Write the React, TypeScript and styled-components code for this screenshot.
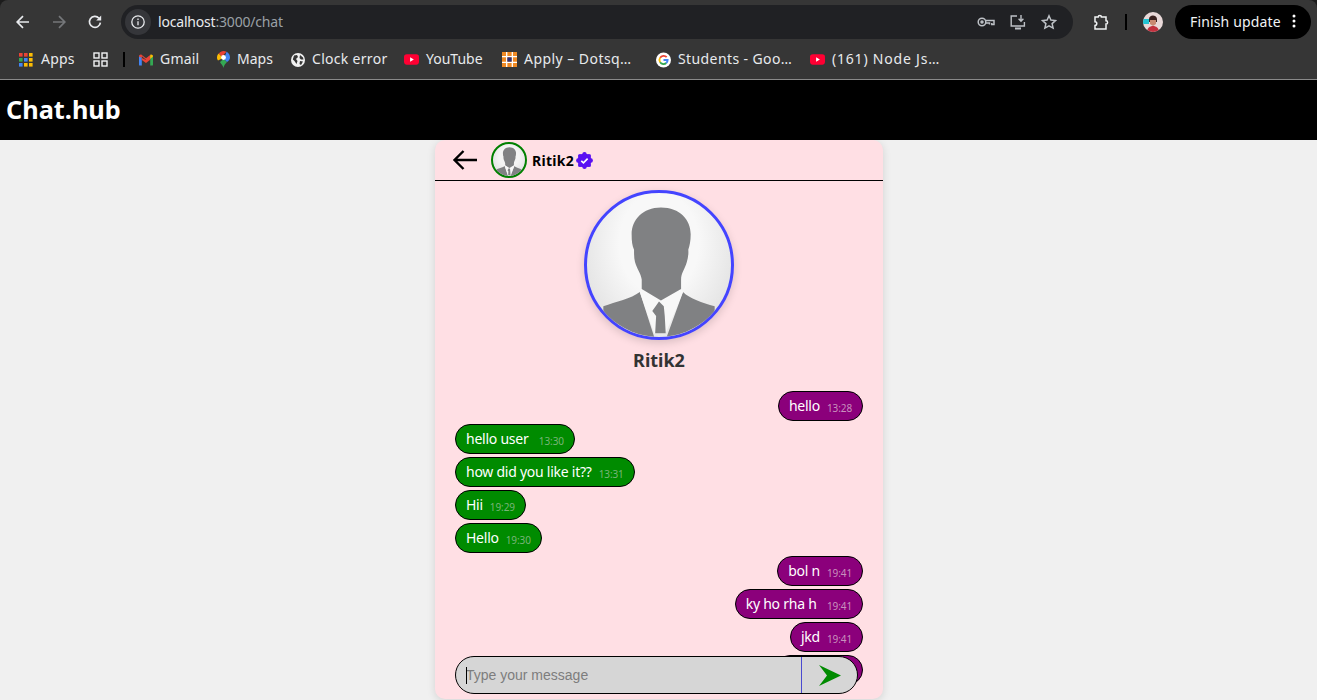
import React from 'react';
import styled, { createGlobalStyle } from 'styled-components';

const GlobalStyle = createGlobalStyle`
  * { box-sizing: border-box; }
  html, body { margin: 0; padding: 0; height: 100%; background: #1c1c1c; overflow: hidden; }
  body { font-family: "Noto Sans", "Liberation Sans", sans-serif; }
`;

const UI_FONT = `"Noto Sans", "Liberation Sans", sans-serif`;

const bookmarks = [
  { id: 'gmail', label: 'Gmail', width: 40, spacing: 0.2 },
  { id: 'maps', label: 'Maps', width: 37, spacing: 0 },
  { id: 'globe', label: 'Clock error', width: 75, spacing: 0.3 },
  { id: 'yt', label: 'YouTube', width: 59, spacing: 0 },
  { id: 'apply', label: 'Apply – Dotsq…', width: 115, spacing: 0.45 },
  { id: 'google', label: 'Students - Goo…', width: 115, spacing: 0.4 },
  { id: 'yt', label: '(161) Node Js…', width: 108, spacing: 0.8 },
];

// trailing spaces are part of the message text
const messages = [
  { text: 'hello', time: '13:28', mine: true },
  { text: 'hello user ', time: '13:30', mine: false },
  { text: 'how did you like it??', time: '13:31', mine: false },
  { text: 'Hii', time: '19:29', mine: false },
  { text: 'Hello', time: '19:30', mine: false },
  { text: 'bol n', time: '19:41', mine: true },
  { text: 'ky ho rha h ', time: '19:41', mine: true },
  { text: 'jkd', time: '19:41', mine: true },
  { text: 'hello ', time: '19:41', mine: true },
];

const Silhouette = () => (
  <svg viewBox="0 0 150 150" width="100%" height="100%">
    <path
      fill="#808183"
      d="M17 118 C30 113 46 110 55 103 L70 150 L83 150 L100 103 C107 110 120 114 133 118 L133 150 L17 150 Z"
    />
    <path fill="#f8f8f8" d="M55 103 L60 96 L94 96 L100 103 L82 146 L70 146 Z" />
    <path
      fill="#808183"
      d="M77 15 C97 15 108 28 108 43 C108 50 107 55 105.500 59 C106 64 105 68 104 72 C102 79 98 84 98 90 L98 100 L77 112 L57 100 L57 90 C56 84 52 79 50 72 C49 68 49 64 49 59 C47 55 46.500 50 46.500 43 C46.500 28 58 15 77 15 Z"
    />
    <path fill="#808183" d="M68 123 L75 113 L80 118 L81 128 L82 146 L71 146 L72 128 Z" />
  </svg>
);

const Favicon = ({ kind }: { kind: string }) => {
  if (kind === 'gmail')
    return (
      <svg width="14" height="12" viewBox="0 0 15 12">
        <path fill="#4285f4" d="M0 2h3v10H1a1 1 0 0 1-1-1z" />
        <path fill="#34a853" d="M12 2h3v9a1 1 0 0 1-1 1h-2z" />
        <path fill="#ea4335" d="M3 2v4l4.500 3.300V5.600L3 2z M0 2.200C0 .6 1.800-.4 3 .6l4.500 3.400v2L0 2.200z" />
        <path fill="#ea4335" d="M7.500 4 L12 .6 V5.800 L7.500 9.300z" />
        <path fill="#fbbc04" d="M12 .6c1.200-1 3-.1 3 1.600L12 5z" />
      </svg>
    );
  if (kind === 'maps')
    return (
      <svg width="13" height="17" viewBox="0 0 13 17">
        <path fill="#34a853" d="M3 11 C4 13 6 14.500 6.500 17 C7 14.500 8 13 10 11 L6.500 8z" />
        <path fill="#fbbc04" d="M1 9.500 C0 8 0 7 0 6.500 C0 5 .6 3.600 1.800 2.600 L6 7z" />
        <path fill="#ea4335" d="M1.800 2.600 C3 1 4.800 0 6.500 0 C7.600 0 8.600 .3 9.500 .8 L5 5.500z" />
        <path fill="#4285f4" d="M9.500 .8 C11.600 2 13 4 13 6.500 C13 8 12 9.800 10 11 L7 8z" />
        <circle cx="6.500" cy="6.500" r="2.400" fill="#fff" />
      </svg>
    );
  if (kind === 'globe')
    return (
      <svg width="14" height="14" viewBox="0 0 14 14">
        <circle cx="7" cy="7" r="7" fill="#f1f1f1" />
        <path fill="#363636" d="M3 2.500 L6 2 L7 4 L5 6 L6.500 8 L5.500 11 L3.500 8 L1.800 6.500z M9 2 L12 4.500 L12.500 6.500 L10 6.500 L8.500 5z M9 8 L12 8.500 L10 12 L8.500 11z" />
      </svg>
    );
  if (kind === 'yt')
    return (
      <svg width="15" height="11" viewBox="0 0 16 11">
        <rect width="16" height="11" rx="3" fill="#ff0033" />
        <path fill="#fff" d="M6.500 3.200 L10.500 5.500 L6.500 7.800z" />
      </svg>
    );
  if (kind === 'apply')
    return (
      <svg width="15" height="15" viewBox="0 0 16 16">
        <rect width="16" height="16" fill="#f08a24" />
        <path stroke="#fff" strokeWidth="1.400" d="M5 0v16M11 0v16M0 5h16M0 11h16" />
        <rect x="5.700" y="5.700" width="4.600" height="4.600" fill="#2b2f7a" />
      </svg>
    );
  return (
    <svg width="15" height="16" viewBox="0 0 16 16">
      <circle cx="8" cy="8" r="8" fill="#fff" />
      <path fill="none" stroke="#ea4335" strokeWidth="2" d="M11.400 5 A4.400 4.400 0 0 0 4.400 5.600" />
      <path fill="none" stroke="#fbbc04" strokeWidth="2" d="M4.400 5.600 A4.400 4.400 0 0 0 4.400 10.400" />
      <path fill="none" stroke="#34a853" strokeWidth="2" d="M4.400 10.400 A4.400 4.400 0 0 0 11 11.200" />
      <path fill="none" stroke="#4285f4" strokeWidth="2" d="M11 11.200 A4.400 4.400 0 0 0 12.400 8 H8" />
    </svg>
  );
};

const AppsIcon = () => (
  <svg width="15" height="14" viewBox="0 0 15 14">
    {[0, 5, 10].map((x, i) =>
      [0, 5, 10].map((y, j) => (
        <rect
          key={`${i}-${j}`}
          x={x}
          y={y}
          width="3.600"
          height="3.600"
          fill={[['#ea4335', '#34a853', '#4285f4'], ['#ea4335', '#4285f4', '#fbbc04'], ['#fbbc04', '#fbbc04', '#fbbc04']][i][j]}
        />
      )),
    )}
  </svg>
);

const VerifiedBadge = () => (
  <svg width="17" height="17" viewBox="0 0 18 18">
    <circle cx="9" cy="9" r="7.400" fill="#5b12f2" />
    {[0, 45, 90, 135, 180, 225, 270, 315].map((deg) => (
      <circle
        key={deg}
        cx={9 + 6.600 * Math.cos((deg * Math.PI) / 180)}
        cy={9 + 6.600 * Math.sin((deg * Math.PI) / 180)}
        r="2.300"
        fill="#5b12f2"
      />
    ))}
    <path fill="none" stroke="#fff" strokeWidth="1.800" d="M5.600 9.300l2.300 2.100 4.400-4.300" />
  </svg>
);

const App: React.FC = () => {
  return (
    <Screen>
      <GlobalStyle />
      <Browser>
        <Toolbar>
          <NavButton>
            <svg width="16" height="16" viewBox="0 0 16 16" fill="none" stroke="#e8eaed" strokeWidth="1.700">
              <path d="M14 8H2.500M8 2.200 2.200 8 8 13.800" />
            </svg>
          </NavButton>
          <NavButton>
            <svg width="16" height="16" viewBox="0 0 16 16" fill="none" stroke="#75777a" strokeWidth="1.700">
              <path d="M2 8h11.500M8 2.200 13.800 8 8 13.800" />
            </svg>
          </NavButton>
          <NavButton>
            <svg width="16" height="16" viewBox="0 0 16 16" fill="none" stroke="#e8eaed" strokeWidth="1.700">
              <path d="M13.400 8.600A5.500 5.500 0 1 1 12 4.200" />
              <path fill="#e8eaed" stroke="none" d="M14.200 1.600v5h-5z" />
            </svg>
          </NavButton>
          <Omnibox>
            <InfoChip>
              <svg width="14" height="14" viewBox="0 0 14 14" fill="none" stroke="#e8eaed" strokeWidth="1.300">
                <circle cx="7" cy="7" r="6.200" />
                <path d="M7 6.200v4M7 3.600v1.400" />
              </svg>
            </InfoChip>
            <Url>
              localhost<UrlMuted>:3000/chat</UrlMuted>
            </Url>
            <OmniIcons>
              <svg width="18" height="12" viewBox="0 0 18 12" fill="none" stroke="#bdc1c6" strokeWidth="1.500">
                <circle cx="5" cy="6" r="3.800" />
                <circle cx="5" cy="6" r="1" fill="#bdc1c6" />
                <path d="M9 4.600h8v3.800h-2.200v-1.400M12.500 8.400V7H9" />
              </svg>
              <svg width="16" height="16" viewBox="0 0 16 16" fill="none" stroke="#bdc1c6" strokeWidth="1.400">
                <path d="M7 2H1.200v10h13.200V8" />
                <path d="M5 14.500h6" strokeWidth="2" />
                <path d="M11 1v6M8.600 4.800 11 7.200l2.400-2.400" />
              </svg>
              <svg width="16" height="16" viewBox="0 0 16 16" fill="none" stroke="#bdc1c6" strokeWidth="1.500">
                <path d="M8 1.800 9.900 6l4.600.5-3.400 3.100 1 4.500L8 11.800l-4.100 2.300 1-4.500L1.500 6.500 6.100 6z" />
              </svg>
            </OmniIcons>
          </Omnibox>
          <ExtensionButton>
            <svg width="17" height="17" viewBox="0 0 17 17" fill="none" stroke="#f1f3f4" strokeWidth="1.500">
              <path d="M3 3h3.200a1.600 1.600 0 0 1 3.200 0H14v3.800a1.600 1.600 0 0 1 0 3.200V15H3v-3.600a1.800 1.800 0 0 0 0-3.600z" />
            </svg>
          </ExtensionButton>
          <ToolbarDivider />
          <ProfileButton>
            <ProfilePhoto>
              <svg width="20" height="20" viewBox="0 0 20 20">
                <rect width="20" height="20" fill="#e9d9d9" />
                <path fill="#3b2220" d="M6 7c0-4 7-5 8 0v3H6z" />
                <path fill="#c98a72" d="M7 8h6v4l-3 2-3-2z" />
                <path fill="#c2313f" d="M4 20c0-4 3-6 6-6s6 2 6 6z" />
                <rect x="0" y="7" width="6" height="5" fill="#22c4d4" />
              </svg>
            </ProfilePhoto>
          </ProfileButton>
          <UpdatePill>
            Finish update
            <svg width="4" height="14" viewBox="0 0 4 14" fill="#fff">
              <circle cx="2" cy="2" r="1.500" />
              <circle cx="2" cy="7" r="1.500" />
              <circle cx="2" cy="12" r="1.500" />
            </svg>
          </UpdatePill>
        </Toolbar>
        <BookmarkBar>
          <Bookmark>
            <AppsIcon />
            <BookmarkLabel $width={35} $spacing={0.2}>
              Apps
            </BookmarkLabel>
          </Bookmark>
          <GridButton>
            <svg width="15" height="15" viewBox="0 0 15 15" fill="none" stroke="#f1f3f4" strokeWidth="1.400">
              <rect x="1" y="1" width="5" height="5" />
              <rect x="9" y="1" width="5" height="5" />
              <rect x="1" y="9" width="5" height="5" />
              <rect x="9" y="9" width="5" height="5" />
            </svg>
          </GridButton>
          <BookmarkDivider />
          {bookmarks.map((b) => (
            <Bookmark key={b.label}>
              <Favicon kind={b.id} />
              <BookmarkLabel $width={b.width} $spacing={b.spacing}>
                {b.label}
              </BookmarkLabel>
            </Bookmark>
          ))}
        </BookmarkBar>
      </Browser>

      <Page>
        <Navbar>
          <Brand>Chat.hub</Brand>
        </Navbar>
        <Main>
          <ChatCard>
            <ChatHeader>
              <BackArrow width="26" height="22" viewBox="0 0 26 22" fill="none" stroke="#000" strokeWidth="2.400">
                <path d="M25 11H3M11.500 2 2.500 11l9 9" />
              </BackArrow>
              <SmallAvatar>
                <Silhouette />
              </SmallAvatar>
              <HeaderName>Ritik2</HeaderName>
              <VerifiedBadge />
            </ChatHeader>
            <Profile>
              <LargeAvatar>
                <Silhouette />
              </LargeAvatar>
              <ProfileName>Ritik2</ProfileName>
            </Profile>
            <MessageList>
              {messages.map((m, i) => (
                <Bubble key={i} $mine={m.mine}>
                  {m.text}
                  <Time $mine={m.mine}>{m.time}</Time>
                </Bubble>
              ))}
            </MessageList>
            <Composer>
              <Caret />
              <MessageInput placeholder="Type your message" readOnly />
              <SendButton>
                <svg width="22" height="21" viewBox="0 0 22 21">
                  <path fill="#008b00" d="M0 0 22 10.500 0 21 8 10.500z" />
                </svg>
              </SendButton>
            </Composer>
          </ChatCard>
        </Main>
      </Page>
    </Screen>
  );
};

export default App;

const Screen = styled.div`
  width: 1317px;
  height: 700px;
  display: flex;
  flex-direction: column;
  overflow: hidden;
`;

const Browser = styled.header`
  height: 80px;
  flex: none;
  background: #363636;
  border-radius: 8px 8px 0 0;
  border-bottom: 1px solid #8a8a8a;
  font-family: ${UI_FONT};
`;

const Toolbar = styled.div`
  height: 40px;
  padding: 5px 6px 0 5px;
  display: flex;
  align-items: stretch;
`;

const NavButton = styled.div`
  width: 36px;
  height: 34px;
  display: flex;
  align-items: center;
  justify-content: center;
`;

const Omnibox = styled.div`
  flex: 1;
  margin-left: 8px;
  height: 34px;
  border-radius: 17px;
  background: #202124;
  display: flex;
  align-items: center;
  padding: 0 16px 0 4px;
`;

const InfoChip = styled.div`
  width: 26px;
  height: 26px;
  border-radius: 50%;
  background: #35363a;
  display: flex;
  align-items: center;
  justify-content: center;
`;

const Url = styled.div`
  margin: 0 0 2px 7px;
  font-size: 14px;
  color: #e8eaed;
  letter-spacing: -0.19px;
`;

const UrlMuted = styled.span`
  color: #9aa0a6;
`;

const OmniIcons = styled.div`
  margin-left: auto;
  display: flex;
  align-items: center;
  gap: 15px;
`;

const ExtensionButton = styled(NavButton)`
  margin-left: 9px;
`;

const ToolbarDivider = styled.div`
  width: 2px;
  height: 16px;
  margin: 9px 0 0 7px;
  background: #000;
`;

const ProfileButton = styled(NavButton)`
  margin-left: 8px;
`;

const ProfilePhoto = styled.div`
  width: 20px;
  height: 20px;
  border-radius: 50%;
  overflow: hidden;
  display: flex;
`;

const UpdatePill = styled.div`
  margin-left: 4px;
  width: 136px;
  height: 34px;
  padding: 0 15px 2px;
  border-radius: 17px;
  background: #000;
  color: #f1f3f4;
  font-size: 14px;
  letter-spacing: 0.15px;
  display: flex;
  align-items: center;
  justify-content: space-between;
`;

const BookmarkBar = styled.nav`
  height: 39px;
  padding-left: 19px;
  display: flex;
  align-items: center;
  gap: 17px;
`;

const Bookmark = styled.div`
  display: flex;
  align-items: center;
  gap: 7px;
`;

const BookmarkLabel = styled.span<{ $width: number; $spacing: number }>`
  width: ${(p) => p.$width}px;
  margin-bottom: 2px;
  font-size: 14px;
  letter-spacing: ${(p) => p.$spacing}px;
  color: #e8eaed;
  white-space: nowrap;
`;

const GridButton = styled.div`
  display: flex;
`;

const BookmarkDivider = styled.div`
  width: 2px;
  height: 15px;
  margin: 0 -3px 0 -2px;
  background: #000;
`;

const Page = styled.div`
  flex: 1;
  min-height: 0;
  display: flex;
  flex-direction: column;
  background: #f0f0f0;
`;

const Navbar = styled.div`
  height: 60px;
  flex: none;
  background: #000;
  display: flex;
  align-items: center;
  padding: 0 0 2px 6px;
`;

const Brand = styled.h1`
  margin: 0;
  font-family: ${UI_FONT};
  font-size: 25.3px;
  font-weight: 700;
  color: #fff;
`;

const Main = styled.main`
  flex: 1;
  min-height: 0;
  display: flex;
  justify-content: center;
`;

const ChatCard = styled.section`
  position: relative;
  width: 448px;
  height: 559px;
  margin-left: 1px;
  background: #ffdfe4;
  border-radius: 10px;
  box-shadow: 0 2px 8px rgba(0, 0, 0, 0.12);
  overflow: hidden;
  font-family: ${UI_FONT};
`;

const ChatHeader = styled.div`
  height: 41px;
  border-bottom: 1px solid #000;
  display: flex;
  align-items: center;
  padding-left: 17px;
`;

const BackArrow = styled.svg`
  flex: none;
`;

const SmallAvatar = styled.div`
  width: 36px;
  height: 36px;
  margin: 0 5px 0 13px;
  border-radius: 50%;
  border: 2px solid #008000;
  background: radial-gradient(circle at 50% 40%, #f4f4f4 40%, #d4d4d4 100%);
  overflow: hidden;
`;

const HeaderName = styled.span`
  font-size: 14px;
  font-weight: 700;
  letter-spacing: 0.3px;
  color: #000;
  margin-right: 2px;
`;

const Profile = styled.div`
  display: flex;
  flex-direction: column;
  align-items: center;
  padding-top: 9px;
`;

const LargeAvatar = styled.div`
  width: 150px;
  height: 150px;
  border-radius: 50%;
  border: 3px solid #4444ff;
  background: radial-gradient(ellipse 55% 70% at 50% 35%, #f8f8f8 50%, #e4e4e4 100%);
  box-shadow: 0 3px 8px rgba(0, 0, 0, 0.15);
  overflow: hidden;
`;

const ProfileName = styled.h2`
  margin: 7px 0 1px;
  height: 26px;
  line-height: 26px;
  font-size: 18px;
  font-weight: 700;
  color: #333;
`;

const MessageList = styled.div`
  margin-top: 17px;
  padding: 0 20px;
  display: flex;
  flex-direction: column;
  gap: 3px;
`;

const Bubble = styled.div<{ $mine: boolean }>`
  align-self: ${(p) => (p.$mine ? 'flex-end' : 'flex-start')};
  height: 30px;
  padding: 0 10px 2px;
  display: flex;
  align-items: center;
  border: 1px solid #000;
  border-radius: 15px;
  background: ${(p) => (p.$mine ? '#8b007b' : '#008b00')};
  color: #fff;
  font-size: 14px;
  letter-spacing: -0.25px;
  white-space: pre;
`;

const Time = styled.span<{ $mine: boolean }>`
  margin: 5px 0 0 7px;
  font-size: 10px;
  letter-spacing: -0.1px;
  color: ${(p) => (p.$mine ? '#c890bd' : '#78b478')};
`;

const Composer = styled.form`
  position: absolute;
  left: 20px;
  bottom: 5px;
  width: 403px;
  height: 38px;
  display: flex;
  border: 1px solid #000;
  border-radius: 19px;
  background: #d6d6d6;
  overflow: hidden;
`;

const Caret = styled.span`
  position: absolute;
  left: 10px;
  top: 10px;
  width: 1px;
  height: 17px;
  background: #000;
`;

const MessageInput = styled.input`
  flex: 1;
  min-width: 0;
  padding: 0 10px;
  border: 0;
  outline: 0;
  background: transparent;
  font-family: "Liberation Sans", Arial, sans-serif;
  font-size: 14px;
  color: #000;
  &::placeholder {
    color: #7d7d7d;
    opacity: 1;
  }
`;

const SendButton = styled.div`
  width: 56px;
  flex: none;
  border-left: 1px solid #4a4ad0;
  display: flex;
  align-items: center;
  justify-content: center;
  padding-left: 1px;
`;
